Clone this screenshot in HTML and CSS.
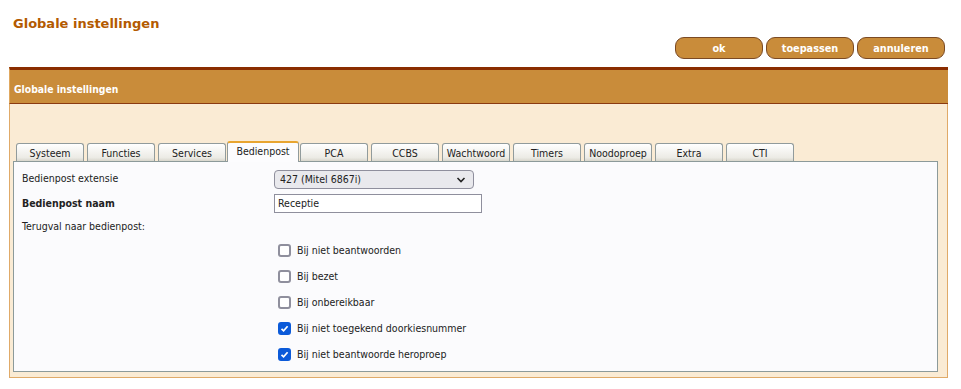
FILE: index.html
```html
<!DOCTYPE html>
<html lang="nl">
<head>
<meta charset="utf-8">
<title>Globale instellingen</title>
<link rel="stylesheet" href="styles.css">
</head>
<body>
<div class="page">
  <h1 class="title">Globale instellingen</h1>
  <div class="actions">
    <button class="btn" type="button">ok</button>
    <button class="btn" type="button">toepassen</button>
    <button class="btn" type="button">annuleren</button>
  </div>
  <section class="panel">
    <div class="panel-head">Globale instellingen</div>
    <div class="panel-body">
      <ul class="tabs">
        <li class="tab">Systeem</li>
        <li class="tab">Functies</li>
        <li class="tab">Services</li>
        <li class="tab active">Bedienpost</li>
        <li class="tab">PCA</li>
        <li class="tab">CCBS</li>
        <li class="tab">Wachtwoord</li>
        <li class="tab">Timers</li>
        <li class="tab">Noodoproep</li>
        <li class="tab">Extra</li>
        <li class="tab">CTI</li>
      </ul>
      <div class="tab-content">
        <div class="row">
          <label class="lbl">Bedienpost extensie</label>
          <div class="select-wrap">
            <select class="select"><option>427 (Mitel 6867i)</option></select>
            <svg class="chev" width="10" height="6" viewBox="0 0 10 6"><path d="M1.5 1 L5 4.5 L8.5 1" fill="none" stroke="#222" stroke-width="1.6"/></svg>
          </div>
        </div>
        <div class="row">
          <label class="lbl bold">Bedienpost naam</label>
          <input class="text" type="text" value="Receptie">
        </div>
        <div class="row short">
          <span class="lbl">Terugval naar bedienpost:</span>
        </div>
        <div class="checks">
          <label class="check"><input type="checkbox"><span>Bij niet beantwoorden</span></label>
          <label class="check"><input type="checkbox"><span>Bij bezet</span></label>
          <label class="check"><input type="checkbox"><span>Bij onbereikbaar</span></label>
          <label class="check"><input type="checkbox" checked><span>Bij niet toegekend doorkiesnummer</span></label>
          <label class="check"><input type="checkbox" checked><span>Bij niet beantwoorde heroproep</span></label>
        </div>
      </div>
    </div>
  </section>
</div>
</body>
</html>
```

FILE: styles.css
```css
html, body {
  margin: 0;
  padding: 0;
  background: #ffffff;
}
body {
  font-family: "DejaVu Sans Condensed", "DejaVu Sans", sans-serif;
  font-stretch: condensed;
  font-size: 10px;
  color: #222;
}
.page {
  padding: 14px 13px 0 9px;
}
.title {
  margin: 0 0 0 4px;
  font-family: "DejaVu Sans", sans-serif;
  font-stretch: normal;
  font-size: 13px;
  line-height: 20px;
  font-weight: bold;
  color: #b35a00;
}
.actions {
  display: flex;
  justify-content: flex-end;
  gap: 3px;
  margin: 3px 3px 0 0;
}
.btn {
  width: 88px;
  height: 22px;
  padding: 0;
  border: 1px solid #7b4a24;
  border-radius: 9px;
  background: #c98c3a;
  color: #fff;
  font-family: "DejaVu Sans Condensed", "DejaVu Sans", sans-serif;
  font-stretch: condensed;
  font-size: 10.8px;
  font-weight: bold;
}
.panel {
  margin-top: 8px;
}
.panel-head {
  border-top: 3px solid #8a2d00;
  border-bottom: 1px solid #8a3a10;
  border-left: 1px solid #e0a860;
  background: #c98c3a;
  color: #fff;
  font-weight: bold;
  font-size: 10.3px;
  height: 33px;
  line-height: 38px;
  padding-left: 4px;
}
.panel-body {
  background: #faebd4;
  border: 1px solid #e0aa68;
  border-top: none;
  padding: 37px 9px 5px 3px;
}
.tabs {
  list-style: none;
  margin: 0;
  padding: 0 0 0 3px;
  display: flex;
  gap: 3px;
  align-items: flex-end;
}
.tab {
  width: 66px;
  height: 17px;
  line-height: 18px;
  text-align: center;
  border: 1px solid #919b9c;
  border-bottom: none;
  border-radius: 3px 3px 0 0;
  background: linear-gradient(#ffffff, #ecebe5 80%, #d8d6cc);
  color: #222;
  font-size: 10.5px;
}
.tab.active {
  width: 70px;
  height: 19px;
  line-height: 17px;
  margin: 0 -2px -1px;
  background: #fcfcfe;
  border-top: 2px solid #e8a530;
  position: relative;
  z-index: 1;
}
.tab-content {
  background: #fbfbfd;
  border: 1px solid #8c9a9a;
  height: 211px;
  padding: 5px 8px 0 8px;
  box-sizing: border-box;
}
.row {
  display: flex;
  align-items: center;
  height: 24px;
}
.row:first-child .lbl {
  margin-top: -3px;
}
.row.short {
  height: 22px;
}
.lbl {
  width: 252px;
  font-size: 10.5px;
}
.bold {
  font-weight: bold;
}
.select-wrap {
  position: relative;
  height: 19px;
}
.select {
  appearance: none;
  width: 200px;
  height: 19px;
  border: 1px solid #8f8f9d;
  border-radius: 4px;
  background: #e9e9ed;
  font-family: "DejaVu Sans Condensed", "DejaVu Sans", sans-serif;
  font-stretch: condensed;
  font-size: 10.5px;
  padding: 0 5px;
  color: #222;
}
.chev {
  position: absolute;
  right: 8px;
  top: 7px;
}
.text {
  width: 208px;
  height: 19px;
  box-sizing: border-box;
  border: 1px solid #8f8f9d;
  padding: 0 3px;
  font-family: "DejaVu Sans Condensed", "DejaVu Sans", sans-serif;
  font-stretch: condensed;
  font-size: 10.5px;
  color: #222;
}
.checks {
  display: flex;
  flex-direction: column;
  padding-left: 256px;
}
.check {
  display: flex;
  align-items: center;
  height: 26px;
  font-size: 10.5px;
}
.check input {
  appearance: none;
  -webkit-appearance: none;
  box-sizing: border-box;
  margin: 0 6px 0 0;
  width: 13px;
  height: 13px;
  border: 2px solid #8f8f9d;
  border-radius: 3px;
  background: #fff;
}
.check input:checked {
  border-color: #0b5ad9;
  background: #0b5ad9 url("data:image/svg+xml,%3Csvg xmlns='http://www.w3.org/2000/svg' viewBox='0 0 9 9'%3E%3Cpath d='M1.5 4.8 L3.6 6.8 L7.6 2.2' fill='none' stroke='white' stroke-width='1.7'/%3E%3C/svg%3E") center / 9px 9px no-repeat;
}
```
